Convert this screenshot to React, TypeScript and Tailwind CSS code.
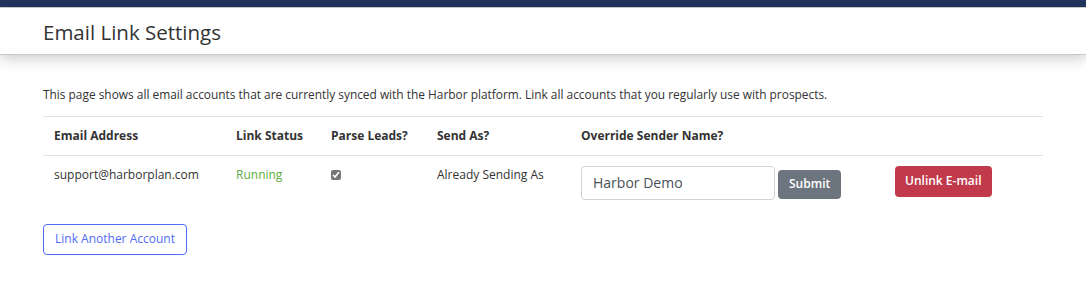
export default function App() {
  const font = { fontFamily: '"Open Sans", "Noto Sans", sans-serif' };
  return (
    <div className="w-[1086px] h-[292px] bg-white overflow-hidden text-[#333]" style={font}>
      <div className="h-[7px] bg-[#22355e]" />
      <div className="h-[1px] bg-[#d6d6d6]" />
      <div className="relative h-[47px] bg-white flex items-center pt-[3px] px-[43px] shadow-[0_3px_14px_rgba(0,0,0,0.22)] border-b border-[#c8c8c8]">
        <h1 className="text-[20.5px] font-normal text-[#333]">Email Link Settings</h1>
      </div>
      <div className="px-[43px] pt-[31px]">
        <p className="text-[11.9px]">
          This page shows all email accounts that are currently synced with the Harbor platform. Link all accounts that you regularly use with prospects.
        </p>
        <table className="mt-[12px] w-[1000px] border-t border-[#dee2e6] text-[12px] table-fixed">
          <thead>
            <tr className="h-[39px] border-b border-[#dee2e6] text-left">
              <th className="w-[182px] px-[11px] font-bold">Email Address</th>
              <th className="w-[95px] px-[11px] font-bold">Link Status</th>
              <th className="w-[106px] px-[11px] font-bold">Parse Leads?</th>
              <th className="w-[144px] px-[11px] font-bold">Send As?</th>
              <th className="w-[314px] px-[11px] font-bold">Override Sender Name?</th>
              <th className="px-[11px]" />
            </tr>
          </thead>
          <tbody>
            <tr className="align-top">
              <td className="px-[11px] pt-[10px]">support@harborplan.com</td>
              <td className="px-[11px] pt-[10px] text-[#5cae45]">Running</td>
              <td className="px-[11px] pt-[11px]">
                <input type="checkbox" defaultChecked className="w-[10px] h-[10px] accent-[#767676]" />
              </td>
              <td className="px-[11px] pt-[10px]">Already Sending As</td>
              <td className="px-[11px] pt-[10px]">
                <div className="flex items-start gap-[3px]">
                  <input
                    defaultValue="Harbor Demo"
                    className="w-[194px] h-[34px] border border-[#ced4da] rounded-[4px] px-[11px] text-[14px] text-[#495057] outline-none"
                    style={font}
                  />
                  <button className="mt-[4px] h-[29px] px-[11px] bg-[#6c757d] text-white text-[12px] font-semibold rounded-[4px]">
                    Submit
                  </button>
                </div>
              </td>
              <td className="px-[11px] pt-[10px]">
                <button className="h-[31px] px-[10px] bg-[#c13a4b] text-white text-[12px] font-semibold rounded-[4px]">
                  Unlink E-mail
                </button>
              </td>
            </tr>
          </tbody>
        </table>
        <button className="mt-[24px] h-[31px] px-[11px] border border-[#4f6df5] rounded-[4px] text-[#4f6df5] text-[12px]">
          Link Another Account
        </button>
      </div>
    </div>
  );
}
